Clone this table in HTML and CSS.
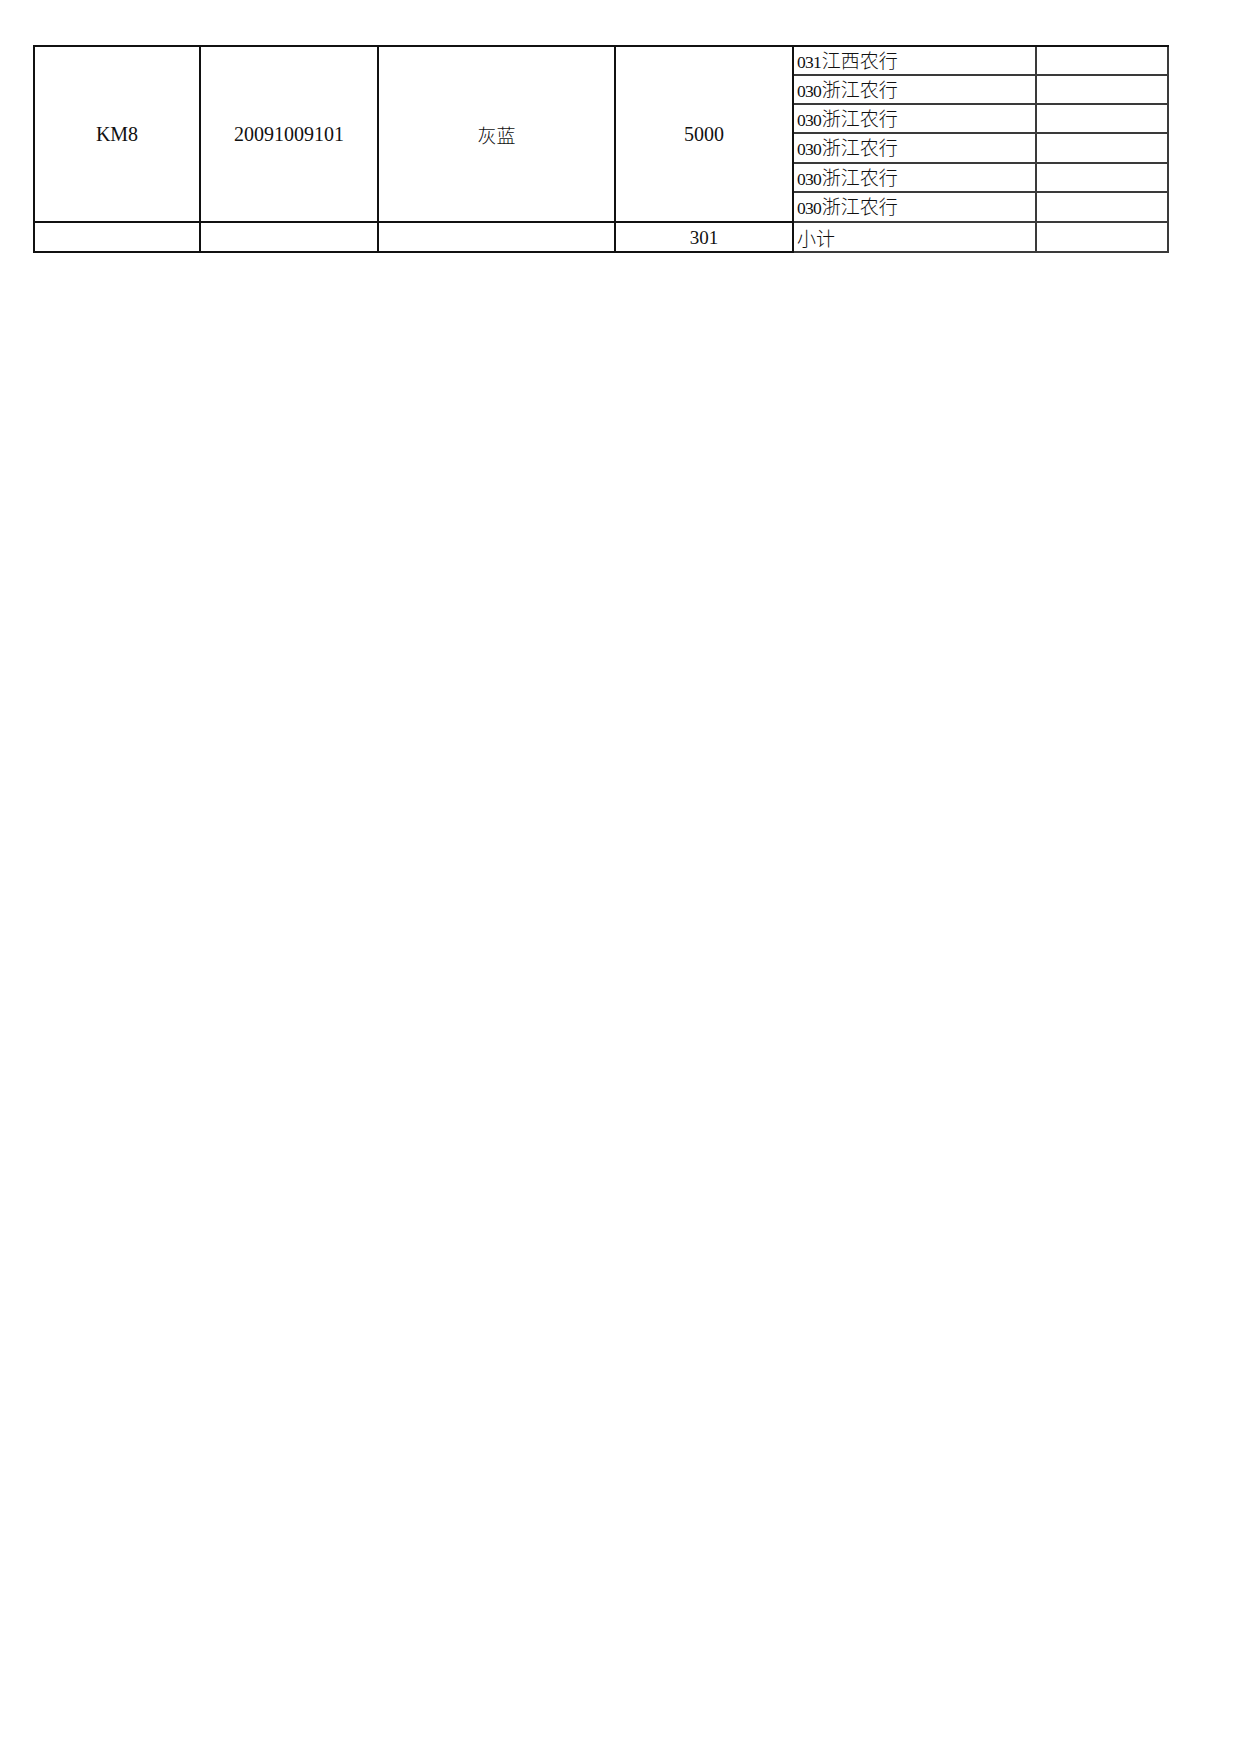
FILE: index.html
```html
<!DOCTYPE html>
<html lang="zh-CN">
<head>
<meta charset="utf-8">
<title>表</title>
<link rel="stylesheet" href="styles.css">
</head>
<body>
<table class="sheet">
  <colgroup>
    <col class="c1"><col class="c2"><col class="c3"><col class="c4"><col class="c5"><col class="c6">
  </colgroup>
  <tbody>
    <tr class="r29">
      <td class="big" rowspan="6">KM8</td>
      <td class="big" rowspan="6">20091009101</td>
      <td class="big zh" rowspan="6">灰蓝</td>
      <td class="big" rowspan="6">5000</td>
      <td class="bank"><span class="code">031</span>江西农行</td>
      <td class="blank"></td>
    </tr>
    <tr class="r29">
      <td class="bank"><span class="code">030</span>浙江农行</td>
      <td class="blank"></td>
    </tr>
    <tr class="r29">
      <td class="bank"><span class="code">030</span>浙江农行</td>
      <td class="blank"></td>
    </tr>
    <tr class="r30">
      <td class="bank"><span class="code">030</span>浙江农行</td>
      <td class="blank"></td>
    </tr>
    <tr class="r29">
      <td class="bank"><span class="code">030</span>浙江农行</td>
      <td class="blank"></td>
    </tr>
    <tr class="r30">
      <td class="bank"><span class="code">030</span>浙江农行</td>
      <td class="blank"></td>
    </tr>
    <tr class="r30">
      <td class="cell"></td>
      <td class="cell"></td>
      <td class="cell"></td>
      <td class="cell sum">301</td>
      <td class="bank">小计</td>
      <td class="blank"></td>
    </tr>
  </tbody>
</table>
</body>
</html>
```

FILE: styles.css
```css
html, body {
  margin: 0;
  padding: 0;
  background: #ffffff;
}

body {
  padding: 45px 0 0 33px;
  font-family: "Liberation Serif", "Noto Sans CJK SC", serif;
  color: #111111;
}

.sheet {
  table-layout: fixed;
  border-collapse: separate;
  border-spacing: 0;
  width: 1136px;
  border-left: 2px solid #111111;
  border-top: 2px solid #111111;
}

.c1 { width: 166px; }
.c2 { width: 178px; }
.c3 { width: 237px; }
.c4 { width: 178px; }
.c5 { width: 243px; }
.c6 { width: 132px; }

.sheet td {
  box-sizing: border-box;
  padding: 0;
  border-right: 2px solid #111111;
  border-bottom: 2px solid #111111;
  line-height: 1;
  overflow: hidden;
  white-space: nowrap;
}

.r29 td.bank, .r29 td.blank { height: 29px; }
.r30 td { height: 30px; }

.big {
  text-align: center;
  vertical-align: middle;
  font-size: 20px;
  padding-top: 1px;
}

.zh {
  font-family: "Noto Sans CJK SC", sans-serif;
  font-size: 19px;
  font-weight: 300;
}

.sum {
  text-align: center;
  font-size: 19px;
  padding-top: 2px;
}

.sheet td.bank,
.sheet td.blank {
  border-right-color: #3a3a3a;
  border-bottom-color: #3a3a3a;
}

.bank {
  padding-left: 3px !important;
  font-family: "Noto Sans CJK SC", sans-serif;
  font-size: 19px;
  font-weight: 300;
  vertical-align: middle;
}

.code {
  font-family: "Liberation Serif", serif;
  font-size: 17.5px;
  font-weight: 400;
  letter-spacing: -0.8px;
  margin-right: 1px;
}
```
